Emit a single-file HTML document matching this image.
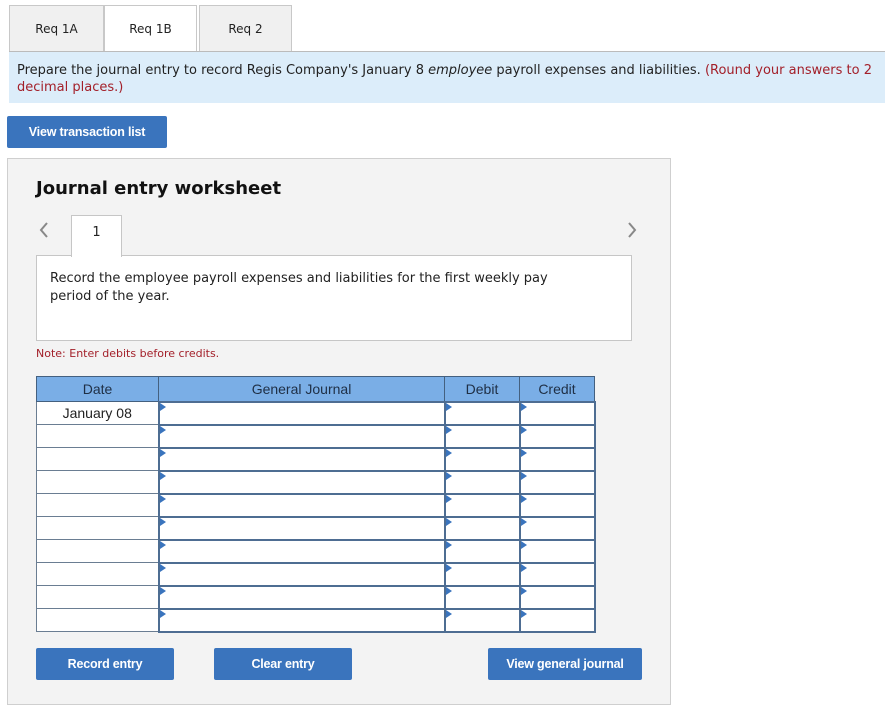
<!DOCTYPE html>
<html><head><meta charset="utf-8"><style>
*{box-sizing:border-box;margin:0;padding:0}
body{width:885px;height:714px;background:#fff;font-family:"DejaVu Sans",Verdana,sans-serif;position:relative;overflow:hidden;color:#222}
.a{position:absolute}
.tab{position:absolute;top:5px;height:47px;border:1px solid #c8c8c8;border-bottom:none;background:#f0f0f0;font-size:12px;text-align:center;line-height:46px}
.btn{position:absolute;background:#3a74bd;color:#fff;font-family:"Liberation Sans",Arial,sans-serif;font-weight:bold;font-size:12.5px;text-align:center;border-radius:2px;letter-spacing:-0.2px}
table{position:absolute;left:36px;top:376px;border-collapse:collapse;table-layout:fixed}
td,th{height:23px;padding:0}
th{background:#7aaee6;border:1px solid #44607f;font-family:"Liberation Sans",Arial,sans-serif;font-weight:normal;font-size:14px;color:#1f2f45;height:25px}
td.d{background:#fff;border:1px solid #6a7d92;font-family:"Liberation Sans",Arial,sans-serif;font-size:14px;text-align:center}
td.i{background:#fff;border:2px solid #4e6d92;position:relative}
td.i:before{content:"";position:absolute;left:0;top:0;border-left:6px solid #3a74bd;border-top:4px solid transparent;border-bottom:4px solid transparent}
</style></head><body>
<div class="tab" style="left:9px;width:95px">Req 1A</div>
<div class="tab" style="left:104px;width:93px;background:#fff;height:48px">Req 1B</div>
<div class="tab" style="left:199px;width:93px">Req 2</div>
<div class="a" style="left:9px;top:51px;width:876px;height:1px;background:#bbb"></div>
<div class="a" style="left:9px;top:52px;width:876px;height:51px;background:#dcedfa"></div>
<div class="a" style="left:17px;top:62px;font-size:13px;line-height:17px;width:868px">Prepare the journal entry to record Regis Company's January 8 <i>employee</i> payroll expenses and liabilities. <span style="color:#a3202a">(Round your answers to 2 decimal places.)</span></div>
<div class="btn" style="left:7px;top:116px;width:160px;height:32px;line-height:32px">View transaction list</div>
<div class="a" style="left:7px;top:158px;width:664px;height:547px;background:#f3f3f3;border:1px solid #cfcfcf"></div>
<div class="a" style="left:36px;top:178px;font-size:18px;font-weight:bold;color:#111">Journal entry worksheet</div>
<svg class="a" style="left:38px;top:221px" width="12" height="18"><path d="M9 2 L3 9 L9 16" fill="none" stroke="#888" stroke-width="2"/></svg>
<svg class="a" style="left:626px;top:221px" width="12" height="18"><path d="M3 2 L9 9 L3 16" fill="none" stroke="#888" stroke-width="2"/></svg>
<div class="a" style="left:36px;top:255px;width:596px;height:86px;background:#fff;border:1px solid #c6c6c6"></div>
<div class="a" style="left:71px;top:215px;width:51px;height:42px;background:#fff;border:1px solid #c6c6c6;border-bottom:none;text-align:center;font-size:13px;line-height:34px">1</div>
<div class="a" style="left:50px;top:270px;font-size:13px;line-height:18px;width:510px">Record the employee payroll expenses and liabilities for the first weekly pay period of the year.</div>
<div class="a" style="left:36px;top:347px;font-size:11px;color:#a3202a">Note: Enter debits before credits.</div>
<table>
<colgroup><col style="width:122px"><col style="width:286px"><col style="width:75px"><col style="width:75px"></colgroup>
<tr><th>Date</th><th>General Journal</th><th>Debit</th><th>Credit</th></tr>
<tr><td class="d">January 08</td><td class="i"></td><td class="i"></td><td class="i"></td></tr>
<tr><td class="d"></td><td class="i"></td><td class="i"></td><td class="i"></td></tr>
<tr><td class="d"></td><td class="i"></td><td class="i"></td><td class="i"></td></tr>
<tr><td class="d"></td><td class="i"></td><td class="i"></td><td class="i"></td></tr>
<tr><td class="d"></td><td class="i"></td><td class="i"></td><td class="i"></td></tr>
<tr><td class="d"></td><td class="i"></td><td class="i"></td><td class="i"></td></tr>
<tr><td class="d"></td><td class="i"></td><td class="i"></td><td class="i"></td></tr>
<tr><td class="d"></td><td class="i"></td><td class="i"></td><td class="i"></td></tr>
<tr><td class="d"></td><td class="i"></td><td class="i"></td><td class="i"></td></tr>
<tr><td class="d"></td><td class="i"></td><td class="i"></td><td class="i"></td></tr>
</table>
<div class="btn" style="left:36px;top:648px;width:138px;height:32px;line-height:32px">Record entry</div>
<div class="btn" style="left:214px;top:648px;width:138px;height:32px;line-height:32px">Clear entry</div>
<div class="btn" style="left:488px;top:648px;width:154px;height:32px;line-height:32px">View general journal</div>
</body></html>
